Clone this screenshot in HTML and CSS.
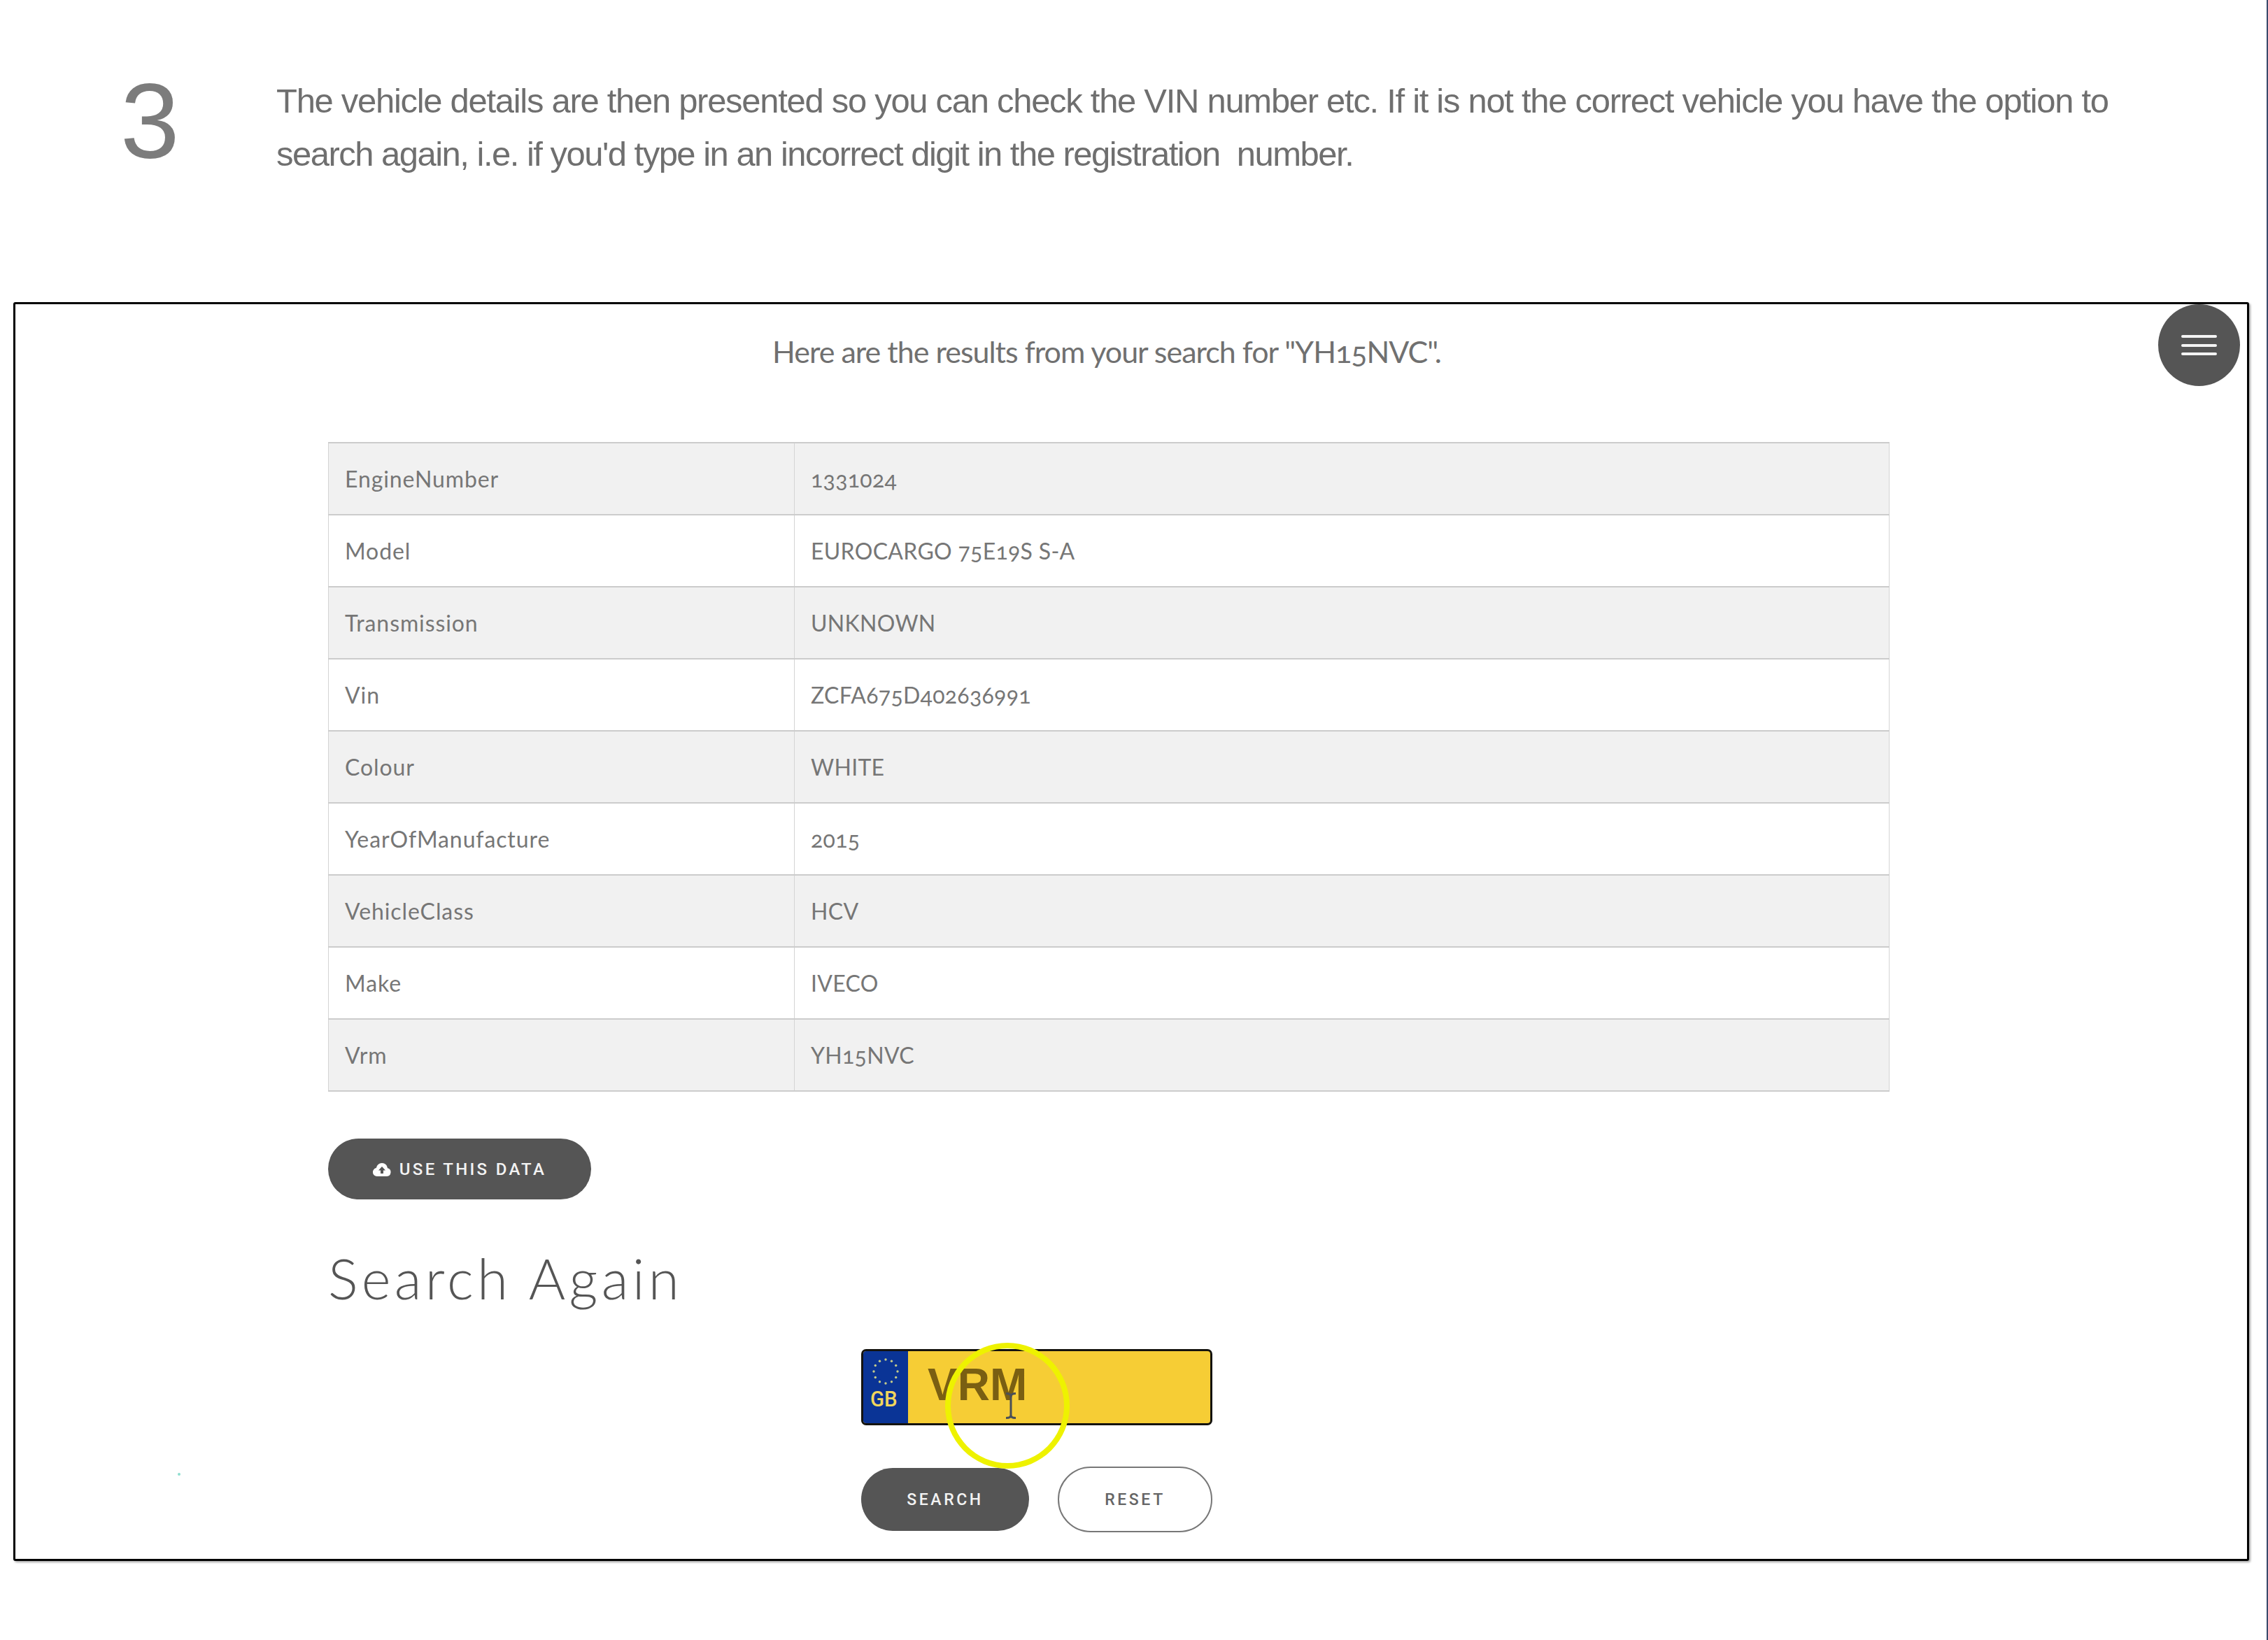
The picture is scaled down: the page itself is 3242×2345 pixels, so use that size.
FILE: index.html
```html
<!DOCTYPE html>
<html lang="en">
<head>
  <meta charset="UTF-8">
  <title>Vehicle lookup step 3</title>
  <link rel="stylesheet" href="styles.css">
</head>
<body>
  <div class="page">
    <!-- Step text -->
    <div class="step">
      <div class="step-num">3</div>
      <p class="step-text">The vehicle details are then presented so you can check the VIN number etc. If it is not the correct vehicle you have the option to <span class="step-line2">search again, i.e. if you'd type in an incorrect digit in the registration &nbsp;number.</span></p>
    </div>

    <!-- Screenshot frame -->
    <div class="frame">
      <button class="menu-btn" aria-label="Menu">
        <span></span><span></span><span></span>
      </button>

      <p class="results">Here are the results from your search for "YH15NVC".</p>

      <table class="details">
        <tr><td>EngineNumber</td><td>1331024</td></tr>
        <tr><td>Model</td><td>EUROCARGO 75E19S S-A</td></tr>
        <tr><td>Transmission</td><td>UNKNOWN</td></tr>
        <tr><td>Vin</td><td>ZCFA675D402636991</td></tr>
        <tr><td>Colour</td><td>WHITE</td></tr>
        <tr><td>YearOfManufacture</td><td>2015</td></tr>
        <tr><td>VehicleClass</td><td>HCV</td></tr>
        <tr><td>Make</td><td>IVECO</td></tr>
        <tr><td>Vrm</td><td>YH15NVC</td></tr>
      </table>

      <button class="pill pill-dark use-data">
        <svg class="cloud" viewBox="0 0 26 20" width="26" height="20">
          <path fill="#fff" d="M6 20a6 6 0 0 1-1.2-11.9A8.5 8.5 0 0 1 13 1a8 8 0 0 1 8 7.2A6 6 0 0 1 20 20z"/>
          <path fill="#555" d="M13 6l5 5.5h-3V16h-4v-4.500H8z"/>
        </svg>
        USE THIS DATA
      </button>

      <h2 class="again">Search Again</h2>

      <div class="search-form">
        <div class="plate">
          <div class="plate-flag">
            <svg class="stars" viewBox="0 0 40 40" width="40" height="40">
              <g fill="#c4cb8a">
                <circle cx="20" cy="3" r="1.700"/><circle cx="28.500" cy="5.300" r="1.700"/><circle cx="34.700" cy="11.500" r="1.700"/>
                <circle cx="37" cy="20" r="1.700"/><circle cx="34.700" cy="28.500" r="1.700"/><circle cx="28.500" cy="34.700" r="1.700"/>
                <circle cx="20" cy="37" r="1.700"/><circle cx="11.500" cy="34.700" r="1.700"/><circle cx="5.300" cy="28.500" r="1.700"/>
                <circle cx="3" cy="20" r="1.700"/><circle cx="5.300" cy="11.500" r="1.700"/><circle cx="11.500" cy="5.300" r="1.700"/>
              </g>
            </svg>
            <span class="plate-gb">GB</span>
          </div>
          <div class="plate-text">VRM</div>
        </div>
        <div class="form-btns">
          <button class="pill pill-dark search-btn">SEARCH</button>
          <button class="pill pill-light reset-btn">RESET</button>
        </div>
      </div>

      <!-- Recording cursor highlight -->
      <div class="cursor-ring"></div>
      <svg class="ibeam" viewBox="0 0 18 38" width="18" height="38">
        <path fill="none" stroke="#4a4f57" stroke-width="3" d="M2 1.500c4 0 7 1 7 4v27c0 3-3 4-7 4M16 1.500c-4 0-7 1-7 4v27c0 3 3 4 7 4"/>
      </svg>
      <div class="speck"></div>
    </div>
  </div>
</body>
</html>
```

FILE: styles.css
```css
html, body {
  margin: 0;
  background: #fff;
}
body {
  width: 3242px;
  height: 2345px;
  overflow: hidden;
}
.page {
  box-sizing: border-box;
  height: 2345px;
  padding: 0 2px 0 19px;
  border-right: 2px solid #39496b;
}

/* step heading */
.step {
  display: flex;
  height: 432px;
  box-sizing: border-box;
  padding: 87px 0 0 153px;
  color: #6f6f6f;
  font-family: "Liberation Sans", Arial, sans-serif;
}
.step-num {
  width: 223px;
  font-size: 152px;
  line-height: 172px;
  color: #7c7c7c;
  letter-spacing: -2px;
}
.step-text {
  margin: 0;
  width: 2660px;
  font-size: 49px;
  line-height: 75.5px;
  letter-spacing: -1.3px;
  padding-top: 20px;
}
.step-line2 {
  letter-spacing: -1.52px;
}

/* framed screenshot */
.frame {
  position: relative;
  box-sizing: border-box;
  width: 3196px;
  height: 1800px;
  background: #fff;
  border: 3px solid #000;
  border-radius: 3px;
  box-shadow: 2px 2px 3px #aaa;
  padding: 0 0 0 447px;
  font-family: Lato, "Liberation Sans", sans-serif;
  color: #6b6b6b;
}
.menu-btn {
  position: absolute;
  top: 0;
  right: 10px;
  width: 117px;
  height: 117px;
  padding: 0;
  border: none;
  border-radius: 50%;
  background: #555;
  display: flex;
  flex-direction: column;
  align-items: center;
  justify-content: center;
  gap: 8.500px;
}
.menu-btn span {
  display: block;
  width: 51px;
  height: 4px;
  border-radius: 2px;
  background: #f4f4f4;
}
.results {
  margin: 0 0 0 -447px;
  padding: 42px 70px 0 0;
  height: 197px;
  box-sizing: border-box;
  text-align: center;
  font-size: 43px;
  line-height: 52px;
  letter-spacing: -1px;
  color: #707070;
  font-variant-numeric: oldstyle-nums;
}

/* vehicle table */
.details {
  border-collapse: collapse;
  width: 2232px;
  table-layout: fixed;
  font-size: 32px;
  color: #767676;
  font-variant-numeric: oldstyle-nums;
  letter-spacing: 0.3px;
}
.details td {
  height: 103px;
  padding: 0 23px;
  border: 1px solid #d4d4d4;
  border-top: 2px solid #ccc;
  border-bottom: 2px solid #ccc;
  box-sizing: border-box;
}
.details td:first-child {
  width: 666px;
  letter-spacing: 0.9px;
}
.details tr:nth-child(odd) {
  background: #f1f1f1;
}

/* buttons */
.pill {
  box-sizing: border-box;
  border-radius: 50px;
  font-family: Roboto, "Liberation Sans", sans-serif;
  font-weight: 500;
  font-size: 24px;
  letter-spacing: 3.300px;
  padding: 0;
  display: flex;
  align-items: center;
  justify-content: center;
}
.pill-dark {
  background: #555;
  color: #f2f2f2;
  border: none;
}
.pill-light {
  background: #fff;
  color: #666;
  border: 2px solid #777;
}
.use-data {
  width: 376px;
  height: 87px;
  margin-top: 67px;
  gap: 12px;
}
.again {
  margin: 62px 0 0;
  font-weight: 300;
  font-size: 80px;
  line-height: 100px;
  letter-spacing: 5.300px;
  color: #555;
}

/* plate + buttons */
.search-form {
  margin: 52px 0 0 762px;
  width: 502px;
}
.plate {
  box-sizing: border-box;
  height: 109px;
  display: flex;
  background: #f6cd35;
  border: 3px solid #14130f;
  border-radius: 7px;
  overflow: hidden;
}
.plate-flag {
  width: 64px;
  background: #0a3496;
  display: flex;
  flex-direction: column;
  align-items: center;
  padding-top: 9px;
  box-sizing: border-box;
}
.plate-gb {
  font-family: Roboto, "Liberation Sans", sans-serif;
  font-weight: 500;
  font-size: 31px;
  line-height: 34px;
  color: #f2d65c;
  transform: translateX(-3px) scaleX(0.95);
  margin-top: 3px;
}
.plate-text {
  padding-left: 28px;
  font-family: "Liberation Sans", sans-serif;
  font-weight: 700;
  font-size: 64px;
  line-height: 97px;
  color: #7a5f12;
}
.form-btns {
  display: flex;
  justify-content: space-between;
  align-items: center;
  margin-top: 59px;
}
.search-btn {
  width: 240px;
  height: 90px;
  font-size: 23px;
  letter-spacing: 3.600px;
}
.reset-btn {
  width: 221px;
  height: 94px;
  font-size: 23px;
  letter-spacing: 3.600px;
}

/* overlays from the screen recording */
.cursor-ring {
  position: absolute;
  left: 1329px;
  top: 1485px;
  width: 178px;
  height: 180px;
  box-sizing: border-box;
  border: 8px solid #eef200;
  border-radius: 50%;
}
.ibeam {
  position: absolute;
  left: 1414px;
  top: 1556px;
}
.speck {
  position: absolute;
  left: 232px;
  top: 1671px;
  width: 4px;
  height: 4px;
  border-radius: 50%;
  background: #8fded0;
}
```
